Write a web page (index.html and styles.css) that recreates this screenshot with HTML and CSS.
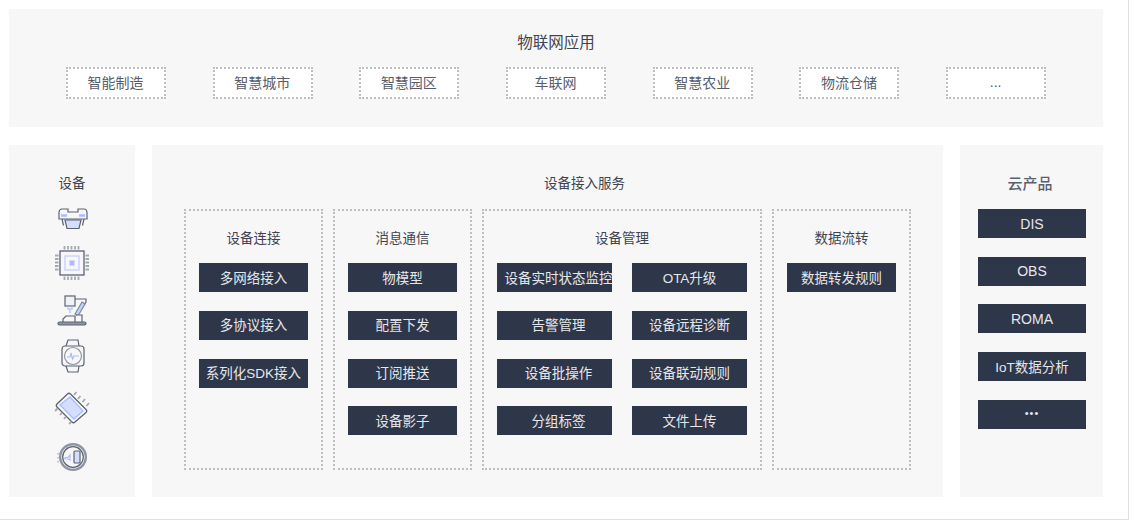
FILE: index.html
```html
<!DOCTYPE html>
<html lang="zh">
<head>
<meta charset="utf-8">
<title>物联网应用</title>
<link rel="stylesheet" href="styles.css">
</head>
<body>
<div class="frame">
  <section class="apps">
    <h2 class="apps-title">物联网应用</h2>
    <div class="apps-row">
      <div class="app">智能制造</div>
      <div class="app">智慧城市</div>
      <div class="app">智慧园区</div>
      <div class="app">车联网</div>
      <div class="app">智慧农业</div>
      <div class="app">物流仓储</div>
      <div class="app">...</div>
    </div>
  </section>
  <div class="main">
    <aside class="devices">
      <h3 class="devices-title">设备</h3>
      <svg class="icon icon-drone" viewBox="0 0 30 22" fill="none" stroke="#5c6375" stroke-width="1.200">
        <path d="M7 12h16l-2 8.500H9z" fill="#d5deff"/>
        <path d="M1 5Q1 1 4 1h6v3h10V1h6q3 0 3 4v6H1z" fill="#f7f7f7"/>
        <path d="M3 7.500h6M21 7.500h6" stroke="#a9bcff" stroke-width="2.400"/>
        <path d="M4 11l1.500 6.500M26 11l-1.500 6.500"/>
      </svg>
      <svg class="icon icon-chip" viewBox="0 0 34 34" fill="none" stroke="#5c6375" stroke-width="1.300">
        <rect x="5" y="5" width="24" height="24"/>
        <rect x="10" y="10" width="14" height="14" stroke="#c3d0ff"/>
        <rect x="14.500" y="14.500" width="5" height="5" fill="#a9bcff" stroke="none"/>
        <path d="M9.500 0v3.500M13 0v3.500M16.500 0v3.500M20 0v3.500M23.500 0v3.500M9.500 30.500V34M13 30.500V34M16.500 30.500V34M20 30.500V34M23.500 30.500V34M0 9.500h3.500M0 13h3.500M0 16.500h3.500M0 20h3.500M0 23.500h3.500M30.500 9.500H34M30.500 13H34M30.500 16.500H34M30.500 20H34M30.500 23.500H34" stroke="#a5a9b4" stroke-width="1.800"/>
      </svg>
      <svg class="icon icon-robot" viewBox="0 0 30 31" fill="none" stroke="#5c6375" stroke-width="1.200">
        <rect x="8" y="1" width="10" height="10" fill="#f2f2f4"/>
        <path d="M11 11v3h4v-3M13 14v4" stroke="#a9bcff"/>
        <path d="M18 4h11v3l-2 3"/>
        <path d="M25 7l3 2-7 12-3-2z" fill="#c3d0ff" stroke="#7f8698"/>
        <path d="M6 27v-3l3-3h9v6M19 20h6v7" fill="#f7f7f7"/>
        <rect x="1" y="27" width="28" height="3" rx="1.500" fill="#8f95a3"/>
      </svg>
      <svg class="icon icon-watch" viewBox="0 0 24 34" fill="none" stroke="#5c6375" stroke-width="1.200">
        <path d="M5 7l2-6h10l1 6M5 27l2 6h10l1-6"/>
        <rect x="1" y="7" width="22" height="20" rx="3"/>
        <circle cx="12" cy="17" r="8.500" stroke="#8f95a3"/>
        <path d="M6 18h3l1-4 1.500 6 1.500-3h5" stroke="#a9bcff"/>
      </svg>
      <svg class="icon icon-module" viewBox="0 0 38 37" fill="none" stroke="#5c6375" stroke-width="1.300">
        <path d="M14.500 4q1.500-1.500 3 0l15.500 15.500q1.500 1.500 0 3L22 32q-1.500 1.500-3 0L4 17q-1.500-1.500 0-3z" fill="#f7f7f7"/>
        <path d="M17 7l13 14-9 8L7 15z" fill="#d5deff" stroke="#a9bcff"/>
        <path d="M21 5l2.500-3M25 9l2.500-3M29.500 12l2.500-3M33.500 16l2.500-3M4.500 18.500L2 21M9 22.500L7 25M13 26.500L11 29M18.500 31.500L16 34" stroke="#a5a9b4" stroke-width="1.800"/>
      </svg>
      <svg class="icon icon-vac" viewBox="0 0 30 28" fill="none" stroke="#5c6375" stroke-width="1.200">
        <circle cx="16" cy="14" r="12.800" stroke="#8f95a3" stroke-width="2.400"/>
        <circle cx="16" cy="14" r="10.300"/>
        <rect x="17" y="8" width="6" height="12" rx="1" fill="#d5deff"/>
        <path d="M8 14.500h3l2-2.500v5l-2-1H8z" stroke="#a9bcff"/>
        <path d="M1 10v1.500M1 14v1.500M1 18v1.500" stroke="#a5a9b4"/>
      </svg>
    </aside>
    <section class="service">
      <h3 class="service-title">设备接入服务</h3>
      <div class="columns">
        <div class="col">
          <h4 class="col-title">设备连接</h4>
          <div class="stack">
            <div class="tag">多网络接入</div>
            <div class="tag">多协议接入</div>
            <div class="tag">系列化SDK接入</div>
          </div>
        </div>
        <div class="col">
          <h4 class="col-title">消息通信</h4>
          <div class="stack">
            <div class="tag">物模型</div>
            <div class="tag">配置下发</div>
            <div class="tag">订阅推送</div>
            <div class="tag">设备影子</div>
          </div>
        </div>
        <div class="col col-wide">
          <h4 class="col-title">设备管理</h4>
          <div class="stack stack-two">
            <div class="tag">设备实时状态监控</div>
            <div class="tag">OTA升级</div>
            <div class="tag">告警管理</div>
            <div class="tag">设备远程诊断</div>
            <div class="tag">设备批操作</div>
            <div class="tag">设备联动规则</div>
            <div class="tag">分组标签</div>
            <div class="tag">文件上传</div>
          </div>
        </div>
        <div class="col">
          <h4 class="col-title">数据流转</h4>
          <div class="stack">
            <div class="tag">数据转发规则</div>
          </div>
        </div>
      </div>
    </section>
    <aside class="cloud">
      <h3 class="cloud-title">云产品</h3>
      <div class="cloud-list">
        <div class="tag tag-latin">DIS</div>
        <div class="tag tag-latin">OBS</div>
        <div class="tag tag-latin">ROMA</div>
        <div class="tag">IoT数据分析</div>
        <div class="tag tag-more">•••</div>
      </div>
    </aside>
  </div>
</div>
</body>
</html>
```
FILE: styles.css
```css
* { box-sizing: border-box; }
html, body { margin: 0; padding: 0; background: #fff; }
body {
  font-family: "Liberation Sans", "Noto Sans CJK SC", sans-serif;
  font-size: 13.500px;
  color: #3f4453;
  width: 1136px;
  height: 527px;
  overflow: hidden;
}
h2, h3, h4 { margin: 0; font-weight: 400; font-size: 13.500px; line-height: 20px; text-align: center; }
.frame {
  width: 1129px;
  height: 520px;
  padding: 9px 25px 0 9px;
  border-right: 1px solid #dfe0e4;
  border-bottom: 1px solid #dfe0e4;
}
.apps { height: 118px; background: #f7f7f7; padding-top: 24px; }
.apps .apps-title { margin-bottom: 14px; font-size: 15.500px; }
.apps-row { display: flex; gap: 46.700px; padding-left: 57px; }
.app {
  width: 100px;
  height: 32px;
  padding: 0 1px 2px 0;
  background: #fff;
  border: 2px dotted #bcbec3;
  display: flex;
  align-items: center;
  justify-content: center;
  font-size: 14px;
  color: #575c69;
}
.main { display: flex; gap: 17px; margin-top: 18px; height: 352px; }
.devices {
  width: 126px;
  background: #f7f7f7;
  padding-top: 29px;
  display: flex;
  flex-direction: column;
  align-items: center;
}
.devices-title { margin-bottom: 14px; }
.icon { flex: none; }
.icon-drone { width: 30px; height: 22px; margin-left: 1px; }
.icon-chip { width: 34px; height: 34px; margin-top: 16px; }
.icon-robot { width: 30px; height: 31px; margin-top: 15px; }
.icon-watch { width: 24px; height: 34px; margin-top: 13px; margin-left: 1px; }
.icon-module { width: 38px; height: 37px; margin-top: 17px; }
.icon-vac { width: 30px; height: 28px; margin-top: 16px; }
.service { width: 791px; background: #f7f7f7; padding: 29px 32px 0; }
.service-title { margin-bottom: 15px; padding-left: 74px; }
.columns { display: flex; gap: 10px; }
.col {
  width: 139px;
  height: 261px;
  flex: none;
  border: 2px dotted #bcbec3;
  padding: 18px 13px 0;
}
.col-wide { width: 280px; }
.col-title { margin-bottom: 14px; }
.stack { display: flex; flex-direction: column; gap: 18.800px; }
.stack-two { display: grid; grid-template-columns: 115px 115px; gap: 18.800px 20px; }
.stack-two .tag:nth-child(odd) { padding-left: 8px; }
.tag {
  height: 29px;
  padding-bottom: 2px;
  background: #2e364a;
  color: #e6e7ea;
  display: flex;
  align-items: center;
  justify-content: center;
  white-space: nowrap;
}
.tag-latin { padding-bottom: 0; font-size: 14px; }
.tag-more { font-size: 11px; letter-spacing: 1px; }
.cloud { width: 143px; background: #f7f7f7; padding: 29px 17px 0 18px; }
.cloud .cloud-title { margin-bottom: 15px; padding-right: 4px; font-size: 15px; font-weight: 500; color: #5b6070; }
.cloud-list { display: flex; flex-direction: column; gap: 18.700px; }
```
